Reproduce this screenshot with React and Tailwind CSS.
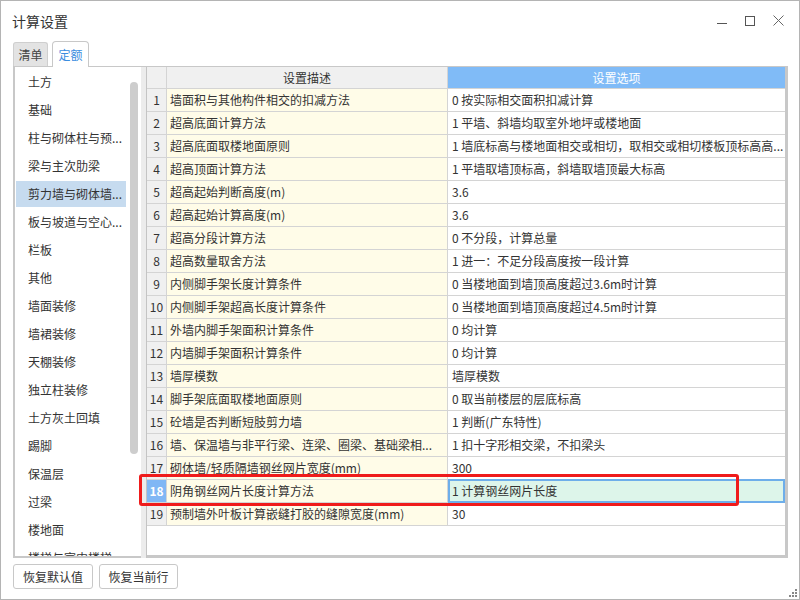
import React from "react";

const leftItems = [
  "土方",
  "基础",
  "柱与砌体柱与预...",
  "梁与主次肋梁",
  "剪力墙与砌体墙...",
  "板与坡道与空心...",
  "栏板",
  "其他",
  "墙面装修",
  "墙裙装修",
  "天棚装修",
  "独立柱装修",
  "土方灰土回填",
  "踢脚",
  "保温层",
  "过梁",
  "楼地面",
  "楼梯与室内楼梯",
];

const rows = [
  ["墙面积与其他构件相交的扣减方法", "0 按实际相交面积扣减计算"],
  ["超高底面计算方法", "1 平墙、斜墙均取室外地坪或楼地面"],
  ["超高底面取楼地面原则", "1 墙底标高与楼地面相交或相切，取相交或相切楼板顶标高高..."],
  ["超高顶面计算方法", "1 平墙取墙顶标高，斜墙取墙顶最大标高"],
  ["超高起始判断高度(m)", "3.6"],
  ["超高起始计算高度(m)", "3.6"],
  ["超高分段计算方法", "0 不分段，计算总量"],
  ["超高数量取舍方法", "1 进一：不足分段高度按一段计算"],
  ["内侧脚手架长度计算条件", "0 当楼地面到墙顶高度超过3.6m时计算"],
  ["内侧脚手架超高长度计算条件", "0 当楼地面到墙顶高度超过4.5m时计算"],
  ["外墙内脚手架面积计算条件", "0 均计算"],
  ["内墙脚手架面积计算条件", "0 均计算"],
  ["墙厚模数", "墙厚模数"],
  ["脚手架底面取楼地面原则", "0 取当前楼层的层底标高"],
  ["砼墙是否判断短肢剪力墙", "1 判断(广东特性)"],
  ["墙、保温墙与非平行梁、连梁、圈梁、基础梁相...", "1 扣十字形相交梁，不扣梁头"],
  ["砌体墙/轻质隔墙钢丝网片宽度(mm)", "300"],
  ["阴角钢丝网片长度计算方法", "1 计算钢丝网片长度"],
  ["预制墙外叶板计算嵌缝打胶的缝隙宽度(mm)", "30"],
];

const font = { fontFamily: '"Noto Sans CJK SC", "Noto Sans", sans-serif' };

export default function App() {
  return (
    <div
      className="relative w-[800px] h-[600px] bg-white border border-[#b4b4b4] text-[12px] text-[#333] overflow-hidden"
      style={font}
    >
      {/* title bar */}
      <div className="flex items-center h-[39px] pl-[11px] pr-[14px]">
        <div className="text-[14px] text-[#333] leading-none pt-[1px]">计算设置</div>
        <div className="ml-auto flex items-center gap-[16px] text-[#555]">
          <svg width="12" height="12" viewBox="0 0 12 12">
            <path d="M1 8.5H11" stroke="#555" strokeWidth="1" />
          </svg>
          <svg width="12" height="12" viewBox="0 0 12 12">
            <rect x="1.5" y="1.5" width="9" height="9" fill="none" stroke="#555" strokeWidth="1" />
          </svg>
          <svg width="13" height="13" viewBox="0 0 13 13">
            <path d="M1.5 1.5L11.5 11.5M11.5 1.5L1.5 11.5" stroke="#666" strokeWidth="1" />
          </svg>
        </div>
      </div>

      {/* tabs */}
      <div className="flex items-end h-[26px] pl-[12px] gap-[4px] relative z-10">
        <div className="w-[35px] h-[24px] bg-[#e3e3e3] border border-[#cfcfcf] border-b-0 rounded-t-[3px] flex items-center justify-center text-[#444] text-[12px]">
          清单
        </div>
        <div className="w-[37px] h-[26px] bg-white border border-[#c8c8c8] border-b-0 rounded-t-[4px] flex items-center justify-center text-[#3b8de0] text-[12px] -mb-[1px]">
          定额
        </div>
      </div>

      {/* main frame */}
      <div className="ml-[12px] mr-[11px] h-[492px] border-t border-[#c8c8c8] flex">
        {/* left list */}
        <div className="relative w-[128px] h-full border-l-2 border-b-2 border-[#c8c8c8] bg-white overflow-hidden pt-[2px]">
          {leftItems.map((t, i) => (
            <div
              key={i}
              className={
                "w-[110px] h-[26px] mb-[2px] ml-[1px] pl-[12px] flex items-center whitespace-nowrap overflow-hidden " +
                (i === 4 ? "bg-[#c6dbef]" : "")
              }
            >
              {t}
            </div>
          ))}
          <div className="absolute left-[115px] top-[15px] w-[8px] h-[372px] rounded-full bg-[#cdcdcd]" />
        </div>

        {/* separator */}
        <div className="w-[6px] h-full bg-[#ececec] border-r border-[#c4c4c4]" />

        {/* table */}
        <div className="flex-1 h-full flex flex-col border-r-[3px] border-b-[3px] border-[#c8c8c8]">
          <div className="flex h-[22px] border-b border-[#d4d4d4]">
            <div className="w-[20px] bg-[#f0f0f0] border-r border-[#d4d4d4]" />
            <div className="w-[281px] bg-[#f0f0f0] border-r border-[#d4d4d4] flex items-center justify-center text-[#333]">
              设置描述
            </div>
            <div className="flex-1 bg-[#80bbf7] flex items-center justify-center text-white">
              设置选项
            </div>
          </div>
          {rows.map(([d, o], i) => {
            const sel = i === 17;
            return (
              <div key={i} className="flex h-[23px] border-b border-[#d4d4d4]">
                <div
                  className={
                    "w-[20px] border-r border-[#d4d4d4] flex items-center justify-center " +
                    (sel ? "bg-[#80b7f5] text-white font-bold" : "bg-[#f0f0f0] text-[#333]")
                  }
                >
                  {i + 1}
                </div>
                <div className="w-[281px] bg-[#fffce8] border-r border-[#d4d4d4] flex items-center pl-[3px] whitespace-nowrap overflow-hidden">
                  {d}
                </div>
                <div
                  className={
                    "flex-1 flex items-center whitespace-nowrap overflow-hidden " +
                    (sel
                      ? "bg-[#ddf5ea] border-2 border-[#6eaeea] pl-[2px] -mt-[1px] h-[24px]"
                      : "bg-white pl-[4px]")
                  }
                >
                  {o}
                </div>
              </div>
            );
          })}
          <div className="flex-1" />
        </div>
      </div>

      {/* buttons */}
      <div className="flex gap-[6px] pl-[12px] pt-[6px]">
        <button className="w-[80px] h-[25px] border border-[#c8c8c8] rounded-[3px] bg-white text-[12px] text-[#333]">
          恢复默认值
        </button>
        <button className="w-[79px] h-[25px] border border-[#c8c8c8] rounded-[3px] bg-white text-[12px] text-[#333]">
          恢复当前行
        </button>
      </div>

      {/* red highlight overlay */}
      <div className="absolute left-[138px] top-[473px] w-[600px] h-[32px] border-[3px] border-[#ef1b1b] rounded-[3px] pointer-events-none" />

      {/* resize grip */}
      <svg className="absolute right-[1px] bottom-[1px]" width="10" height="10" viewBox="0 0 10 10">
        <rect x="7" y="1" width="2" height="2" fill="#888" />
        <rect x="4" y="4" width="2" height="2" fill="#888" />
        <rect x="7" y="4" width="2" height="2" fill="#888" />
        <rect x="1" y="7" width="2" height="2" fill="#888" />
        <rect x="4" y="7" width="2" height="2" fill="#888" />
        <rect x="7" y="7" width="2" height="2" fill="#888" />
      </svg>
    </div>
  );
}
